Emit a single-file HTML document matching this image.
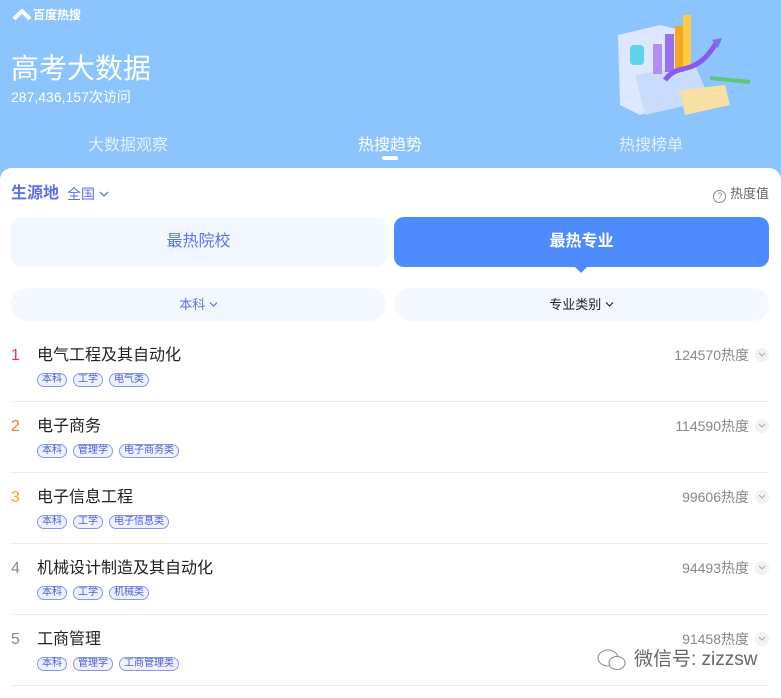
<!DOCTYPE html>
<html><head><meta charset="utf-8"><style>
*{margin:0;padding:0;box-sizing:border-box}
body{width:781px;height:693px;overflow:hidden;background:#8cc4fd;font-family:"Liberation Sans","Noto Sans CJK SC",sans-serif;position:relative}
.a{position:absolute}
.card{position:absolute;left:0;top:168px;width:781px;height:530px;background:#fff;border-radius:12px 12px 0 0}
.tab{position:absolute;top:131px;font-size:16px;color:#e4f0fe}
.row{position:absolute;left:11px;width:758px;height:71px;border-bottom:1px solid #ececec}
.rk{position:absolute;left:0;top:14px;font-size:16px;line-height:22px}
.tt{position:absolute;left:26px;top:14px;font-size:16px;line-height:22px;color:#222}
.tags{position:absolute;left:26px;top:42px;display:flex;gap:6px}
.tag{font-size:10px;line-height:12px;height:14px;padding:0 4px;border:1px solid #8797ef;border-radius:7px;color:#4e5fd0;background:#eef1fe}
.hv{position:absolute;right:20px;top:14px;font-size:14px;line-height:20px;color:#888}
.dd{position:absolute;right:0;top:17px;width:14px;height:14px;border-radius:7px;background:#f2f2f2}
.dd svg{position:absolute;left:3px;top:4px}
</style></head><body>
<svg class="a" style="left:12px;top:9px" width="20" height="12" viewBox="0 0 20 12"><path d="M2 10 L10 2 L18 10" stroke="#fff" stroke-width="4" fill="none" stroke-linejoin="round"/></svg>
<div class="a" style="left:33px;top:6px;font-size:12px;font-weight:bold;color:#fff">百度热搜</div>
<div class="a" style="left:11px;top:50px;font-size:28px;line-height:38px;color:#fff">高考大数据</div>
<div class="a" style="left:11px;top:87px;font-size:14px;color:#fff">287,436,157次访问</div>
<div class="tab" style="left:88px">大数据观察</div>
<div class="tab" style="left:358px;color:#fff">热搜趋势</div>
<div class="a" style="left:382px;top:156px;width:16px;height:4px;border-radius:2px;background:#fff"></div>
<div class="tab" style="left:619px">热搜榜单</div>
<svg class="a" style="left:600px;top:10px" width="160" height="110" viewBox="0 0 160 110">
<path d="M18 25 L60 15 L80 20 L80 90 L40 105 L20 95Z" fill="#dbe8ff"/>
<path d="M35 65 L95 55 L110 90 L45 105Z" fill="#c8dcfb"/>
<path d="M80 80 L125 75 L130 95 L85 105Z" fill="#f8e0a4"/>
<rect x="30" y="35" width="14" height="20" rx="4" fill="#5fd3e8"/>
<rect x="53" y="34" width="9" height="30" fill="#b48cf5"/>
<rect x="65" y="24" width="9" height="38" fill="#9a6ff0"/>
<rect x="75" y="16" width="9" height="46" fill="#f5a623"/>
<rect x="83" y="5" width="8" height="55" fill="#ffcb45"/>
<path d="M65 70 C80 50,95 70,118 30" stroke="#8a5af0" stroke-width="5" fill="none"/>
<path d="M112 30 L122 28 L118 38Z" fill="#7a72f0"/>
<path d="M110 68 L150 72" stroke="#5ec774" stroke-width="4"/>
</svg>
<div class="card">
<div class="a" style="left:11px;top:15px;font-size:16px;line-height:22px;font-weight:bold;color:#5b6ff0">生源地</div>
<div class="a" style="left:67px;top:16px;font-size:14px;line-height:20px;color:#5b6ff0">全国 <svg width="10" height="6" viewBox="0 0 10 6" style="vertical-align:2px"><path d="M1 1 L5 5 L9 1" stroke="#5b6ff0" stroke-width="1.3" fill="none"/></svg></div>
<div class="a" style="right:12px;top:16px;font-size:13px;line-height:20px;color:#666"><span style="display:inline-block;width:13px;height:13px;border:1px solid #888;border-radius:7px;font-size:9px;line-height:11px;text-align:center;color:#888;vertical-align:-1px">?</span> 热度值</div>
<div class="a" style="left:11px;top:49px;width:375px;height:50px;border-radius:10px;background:#f3f7ff;color:#5a72f0;font-size:16px;text-align:center;line-height:50px">最热院校</div>
<div class="a" style="left:394px;top:49px;width:375px;height:50px;border-radius:10px;background:#4e8cfd;color:#fff;font-size:16px;font-weight:bold;text-align:center;line-height:50px">最热专业</div>
<div class="a" style="left:574px;top:98px;width:0;height:0;border:7px solid transparent;border-top-color:#4e8cfd;border-bottom:0"></div>
<div class="a" style="left:11px;top:120px;width:375px;height:33px;border-radius:17px;background:#f3f7ff;color:#5a72f0;font-size:13px;text-align:center;line-height:33px">本科 <svg width="9" height="5" viewBox="0 0 9 5" style="vertical-align:2px"><path d="M1 0.5 L4.5 4 L8 0.5" stroke="#5a72f0" stroke-width="1.2" fill="none"/></svg></div>
<div class="a" style="left:394px;top:120px;width:375px;height:33px;border-radius:17px;background:#f3f7ff;color:#222;font-size:13px;text-align:center;line-height:33px">专业类别 <svg width="9" height="5" viewBox="0 0 9 5" style="vertical-align:2px"><path d="M1 0.5 L4.5 4 L8 0.5" stroke="#222" stroke-width="1.2" fill="none"/></svg></div>
</div>
<div class="row" style="top:331px"><span class="rk" style="color:#f0304e">1</span><span class="tt">电气工程及其自动化</span><div class="tags"><span class="tag">本科</span><span class="tag">工学</span><span class="tag">电气类</span></div><span class="hv">124570热度</span><span class="dd"><svg width="8" height="5" viewBox="0 0 8 5"><path d="M1 1 L4 4 L7 1" stroke="#aaa" fill="none"/></svg></span></div>
<div class="row" style="top:402px"><span class="rk" style="color:#f5732a">2</span><span class="tt">电子商务</span><div class="tags"><span class="tag">本科</span><span class="tag">管理学</span><span class="tag">电子商务类</span></div><span class="hv">114590热度</span><span class="dd"><svg width="8" height="5" viewBox="0 0 8 5"><path d="M1 1 L4 4 L7 1" stroke="#aaa" fill="none"/></svg></span></div>
<div class="row" style="top:473px"><span class="rk" style="color:#f5a623">3</span><span class="tt">电子信息工程</span><div class="tags"><span class="tag">本科</span><span class="tag">工学</span><span class="tag">电子信息类</span></div><span class="hv">99606热度</span><span class="dd"><svg width="8" height="5" viewBox="0 0 8 5"><path d="M1 1 L4 4 L7 1" stroke="#aaa" fill="none"/></svg></span></div>
<div class="row" style="top:544px"><span class="rk" style="color:#888">4</span><span class="tt">机械设计制造及其自动化</span><div class="tags"><span class="tag">本科</span><span class="tag">工学</span><span class="tag">机械类</span></div><span class="hv">94493热度</span><span class="dd"><svg width="8" height="5" viewBox="0 0 8 5"><path d="M1 1 L4 4 L7 1" stroke="#aaa" fill="none"/></svg></span></div>
<div class="row" style="top:615px"><span class="rk" style="color:#888">5</span><span class="tt">工商管理</span><div class="tags"><span class="tag">本科</span><span class="tag">管理学</span><span class="tag">工商管理类</span></div><span class="hv">91458热度</span><span class="dd"><svg width="8" height="5" viewBox="0 0 8 5"><path d="M1 1 L4 4 L7 1" stroke="#aaa" fill="none"/></svg></span></div>
<svg class="a" style="left:596px;top:648px" width="32" height="24" viewBox="0 0 32 24"><ellipse cx="12" cy="10" rx="10" ry="8" fill="none" stroke="#888"/><ellipse cx="21" cy="15" rx="8" ry="6.5" fill="#fff" stroke="#888"/></svg>
<div class="a" style="left:634px;top:647px;font-size:19px;line-height:26px;color:#666">微信号: zizzsw</div>
</body></html>
